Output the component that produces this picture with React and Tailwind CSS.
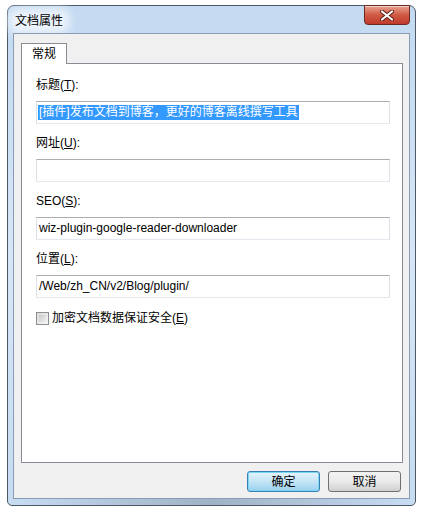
const font = { fontFamily: '"Liberation Sans", "Noto Sans CJK SC", sans-serif' };

const Field = ({ label, keyChar, value, selected }) => (
    <div className="mb-[11px]">
        <div className="h-[16px] leading-[16px] mb-[8px] text-[12px] text-black">
            {label}(<span className="underline">{keyChar}</span>):
        </div>
        <div className="h-[23px] w-[354px] border border-[#abadb3] border-l-[#dbdfe6] border-r-[#dbdfe6] border-b-[#e3e9ef] bg-white flex items-center px-[1px]">
            {value && (
                <span className={`text-[12px] leading-[15px] px-[1px] ${selected ? 'bg-[#3399ff] text-white' : 'text-black'}`}>
                    {value}
                </span>
            )}
        </div>
    </div>
);

const CloseButton = () => (
    <div className="w-[46px] h-[20px] mt-[-1px] rounded-b-[4px] border border-[#6b2a24] bg-gradient-to-b from-[#e8a293] via-[#cf5a43] to-[#c0392b] flex items-center justify-center shadow-[inset_0_1px_0_rgba(255,255,255,0.5)]">
        <svg width="14" height="11" viewBox="0 0 14 11">
            <path d="M2 1.5 L12 9.5 M12 1.5 L2 9.5" stroke="#5a1d14" strokeWidth="4" strokeLinecap="round" />
            <path d="M2 1.5 L12 9.5 M12 1.5 L2 9.5" stroke="#ffffff" strokeWidth="2.2" strokeLinecap="round" />
        </svg>
    </div>
);

const App = () => {
    return (
        <div className="w-[421px] h-[511px] bg-white pt-[5px] pl-[7px]" style={font}>
            <div className="w-[409px] h-[501px] rounded-t-[7px] rounded-b-[5px] border border-[#4d5967] bg-gradient-to-b from-[#c3daf1] via-[#d6e6f6] to-[#c6dcf1] flex flex-col">
                <div className="h-[27px] flex justify-between items-start pl-[6px] pr-[5px]">
                    <div className="mt-[8px] text-[12px] leading-[14px] text-black px-[1px] bg-[#eaf2fb] shadow-[0_0_8px_6px_#eaf2fb] rounded">
                        文档属性
                    </div>
                    <CloseButton />
                </div>
                <div className="flex-1 mx-[5px] border border-[#8a9cb3] bg-[#f0f0f0] pt-[9px] pl-[7px] flex flex-col">
                    <div className="flex">
                        <div className="w-[46px] h-[21px] border border-[#898c95] border-b-0 bg-white flex items-center justify-center text-[12px] text-black mb-[-1px] relative">
                            常规
                        </div>
                    </div>
                    <div className="w-[382px] h-[400px] border border-[#898c95] bg-white pt-[13px] pl-[14px]">
                        <Field label="标题" keyChar="T" value="[插件]发布文档到博客，更好的博客离线撰写工具" selected />
                        <Field label="网址" keyChar="U" value="" />
                        <Field label="SEO" keyChar="S" value="wiz-plugin-google-reader-downloader" />
                        <Field label="位置" keyChar="L" value="/Web/zh_CN/v2/Blog/plugin/" />
                        <div className="flex items-center mt-[7px] text-[12px] text-black">
                            <div className="w-[13px] h-[13px] border border-[#8f8f8f] bg-gradient-to-br from-[#dcdcdc] to-[#f5f5f5] p-[2px]">
                                <div className="w-full h-full bg-gradient-to-br from-[#cbcbcb] to-[#eeeeee]" />
                            </div>
                            <span className="ml-[3px]">加密文档数据保证安全(<span className="underline">E</span>)</span>
                        </div>
                    </div>
                    <div className="flex justify-end gap-[8px] mt-[8px] pr-[8px]">
                        <button className="w-[73px] h-[21px] rounded-[3px] border border-[#3c7fb1] bg-gradient-to-b from-[#e5f4fc] via-[#c4e5f6] to-[#98d1ef] text-[12px] text-black shadow-[inset_0_0_0_1px_#7ad7f7]">
                            确定
                        </button>
                        <button className="w-[73px] h-[21px] rounded-[3px] border border-[#707070] bg-gradient-to-b from-[#f2f2f2] via-[#ebebeb] to-[#cfcfcf] text-[12px] text-black">
                            取消
                        </button>
                    </div>
                </div>
                <div className="h-[6px] mx-[5px] bg-gradient-to-r from-[#c6dcf1] via-[#9fb2c6] to-[#c6dcf1]" />
            </div>
        </div>
    );
};

export default App;
